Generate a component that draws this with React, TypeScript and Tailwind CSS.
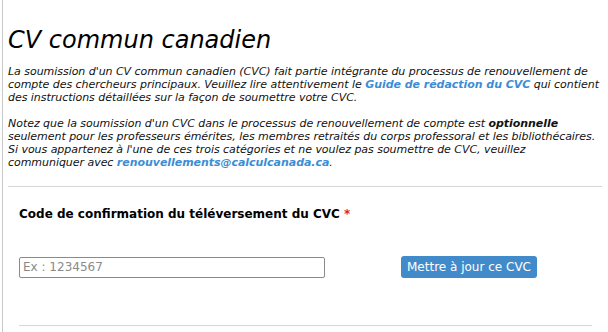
import React from "react";

export default function App() {
  return (
    <div className="w-[608px] h-[332px] bg-white overflow-hidden pl-[2px] pr-[6px]" style={{ fontFamily: '"DejaVu Sans", Verdana, sans-serif' }}>
      <div className="h-full border-l border-[#c8c8c8] pl-[5px]">
        <h1 className="pt-[25px] text-[24px] leading-[30px] italic font-normal text-black">CV commun canadien</h1>
        <div className="mt-[10px] text-[11px] leading-[13px] italic text-[#111] tracking-[-0.04px] whitespace-nowrap">
          <p>
            La soumission d'un CV commun canadien (CVC) fait partie intégrante du processus de renouvellement de
            <br />
            compte des chercheurs principaux. Veuillez lire attentivement le{" "}
            <a className="font-bold text-[#3c8dd4]">Guide de rédaction du CVC</a> qui contient
            <br />
            des instructions détaillées sur la façon de soumettre votre CVC.
          </p>
          <p className="mt-[13px]">
            Notez que la soumission d'un CVC dans le processus de renouvellement de compte est <b>optionnelle</b>
            <br />
            seulement pour les professeurs émérites, les membres retraités du corps professoral et les bibliothécaires.
            <br />
            Si vous appartenez à l'une de ces trois catégories et ne voulez pas soumettre de CVC, veuillez
            <br />
            communiquer avec <a className="font-bold text-[#3c8dd4]">renouvellements@calculcanada.ca</a>.
          </p>
        </div>
        <div className="mt-[17px] border-t border-[#d6d6d6]" />
        <div className="pl-[11px] pr-[10px]">
          <div className="pt-[20px] text-[12px] leading-[15px] font-bold text-black">
            Code de confirmation du téléversement du CVC <span className="text-[#e4202b]">*</span>
          </div>
          <div className="mt-[34px] flex items-center">
            <input
              className="w-[306px] h-[21px] border border-[#8a8a8a] rounded-[2px] px-[3px] text-[12px] text-black placeholder:text-[#8a8a8a] outline-none"
              placeholder="Ex : 1234567"
            />
            <button className="ml-[76px] h-[22px] px-[6px] rounded-[3px] bg-[#428bca] text-white text-[12px] leading-[22px]">
              Mettre à jour ce CVC
            </button>
          </div>
          <div className="mt-[47px] border-t border-[#d6d6d6]" />
        </div>
      </div>
    </div>
  );
}
